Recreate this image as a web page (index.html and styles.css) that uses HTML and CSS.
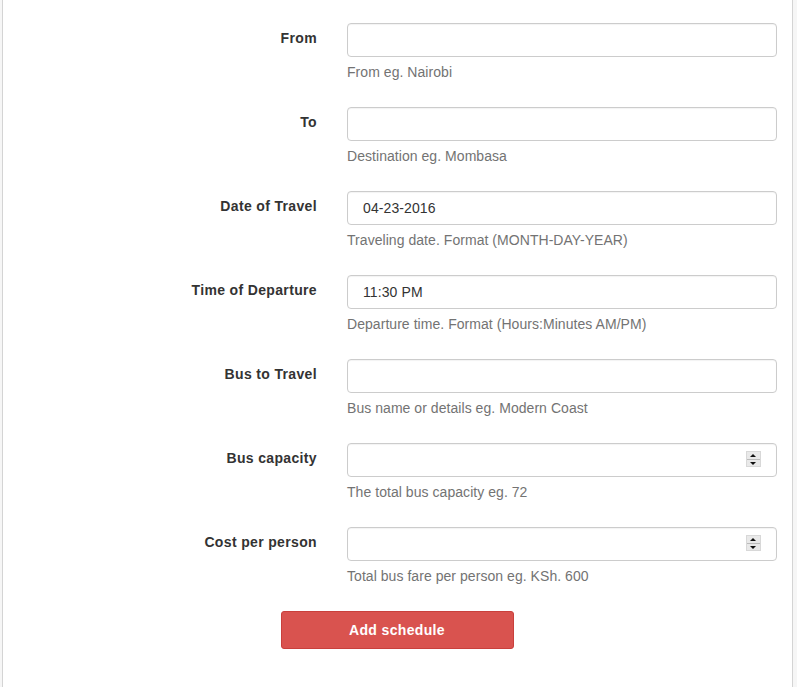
FILE: index.html
```html
<!DOCTYPE html>
<html>
<head>
<meta charset="utf-8">
<link rel="stylesheet" href="styles.css">
</head>
<body>
<div class="panel">
  <form class="form">
    <div class="row">
      <label class="label">From</label>
      <div class="field">
        <input class="input" type="text">
        <p class="help">From eg. Nairobi</p>
      </div>
    </div>
    <div class="row">
      <label class="label">To</label>
      <div class="field">
        <input class="input" type="text">
        <p class="help">Destination eg. Mombasa</p>
      </div>
    </div>
    <div class="row">
      <label class="label">Date of Travel</label>
      <div class="field">
        <input class="input" type="text" value="04-23-2016">
        <p class="help">Traveling date. Format (MONTH-DAY-YEAR)</p>
      </div>
    </div>
    <div class="row">
      <label class="label">Time of Departure</label>
      <div class="field">
        <input class="input" type="text" value="11:30 PM">
        <p class="help">Departure time. Format (Hours:Minutes AM/PM)</p>
      </div>
    </div>
    <div class="row">
      <label class="label">Bus to Travel</label>
      <div class="field">
        <input class="input" type="text">
        <p class="help">Bus name or details eg. Modern Coast</p>
      </div>
    </div>
    <div class="row">
      <label class="label">Bus capacity</label>
      <div class="field">
        <div class="numwrap">
          <input class="input" type="text">
          <span class="spin"><span class="up"></span><span class="down"></span></span>
        </div>
        <p class="help">The total bus capacity eg. 72</p>
      </div>
    </div>
    <div class="row">
      <label class="label">Cost per person</label>
      <div class="field">
        <div class="numwrap">
          <input class="input" type="text">
          <span class="spin"><span class="up"></span><span class="down"></span></span>
        </div>
        <p class="help">Total bus fare per person eg. KSh. 600</p>
      </div>
    </div>
    <div class="actions">
      <button type="button" class="btn">Add schedule</button>
    </div>
  </form>
</div>
</body>
</html>
```

FILE: styles.css
```css
html, body {
  margin: 0;
  padding: 0;
}
body {
  background: #f6f6f6;
  font-family: "Liberation Sans", Arial, sans-serif;
  font-size: 14px;
  line-height: 20px;
  color: #333;
}
.panel {
  margin-left: 2px;
  width: 791px;
  min-height: 687px;
  background: #fff;
  border-left: 1px solid #d4d4d4;
  border-right: 1px solid #d4d4d4;
  box-sizing: border-box;
  padding-top: 23px;
}
.row {
  display: grid;
  grid-template-columns: 329px 460px;
  margin-bottom: 15px;
}
.label {
  text-align: right;
  font-weight: bold;
  letter-spacing: 0.35px;
  padding: 7px 15px 0 0;
  line-height: 16px;
}
.field {
  padding: 0 15px;
}
.input {
  display: block;
  box-sizing: border-box;
  width: 430px;
  height: 34px;
  margin: 0;
  padding: 6px 15px;
  border: 1px solid #ccc;
  border-radius: 4px;
  font-family: "Liberation Sans", Arial, sans-serif;
  font-size: 14px;
  letter-spacing: 0.1px;
  color: #333;
  background: #fff;
  box-shadow: inset 0 1px 1px rgba(0,0,0,0.05);
}
.help {
  margin: 5px 0 10px;
  color: #737373;
  line-height: 20px;
  letter-spacing: 0.05px;
}
.numwrap {
  position: relative;
  width: 430px;
}
.spin {
  position: absolute;
  right: 16px;
  top: 8px;
  width: 15px;
  height: 16px;
  background: #e9e9e9;
  border: 1px solid #d8d8d8;
  box-sizing: border-box;
  display: flex;
  flex-direction: column;
}
.spin .up, .spin .down {
  flex: 1;
  position: relative;
}
.spin .up {
  border-bottom: 1px solid #bbb;
}
.spin .up::after, .spin .down::after {
  content: "";
  position: absolute;
  left: 3px;
  width: 0;
  height: 0;
  border-left: 3.5px solid transparent;
  border-right: 3.5px solid transparent;
}
.spin .up::after {
  top: 2px;
  border-bottom: 3.5px solid #111;
}
.spin .down::after {
  top: 2px;
  border-top: 3.5px solid #111;
}
.actions {
  display: flex;
  justify-content: center;
  padding-right: 1px;
}
.btn {
  width: 233px;
  height: 38px;
  background: #d9534f;
  border: 1px solid #c9403c;
  border-radius: 3px;
  color: #fff;
  font-family: "Liberation Sans", Arial, sans-serif;
  font-weight: bold;
  font-size: 14px;
  letter-spacing: 0.35px;
  padding: 0;
}
```
